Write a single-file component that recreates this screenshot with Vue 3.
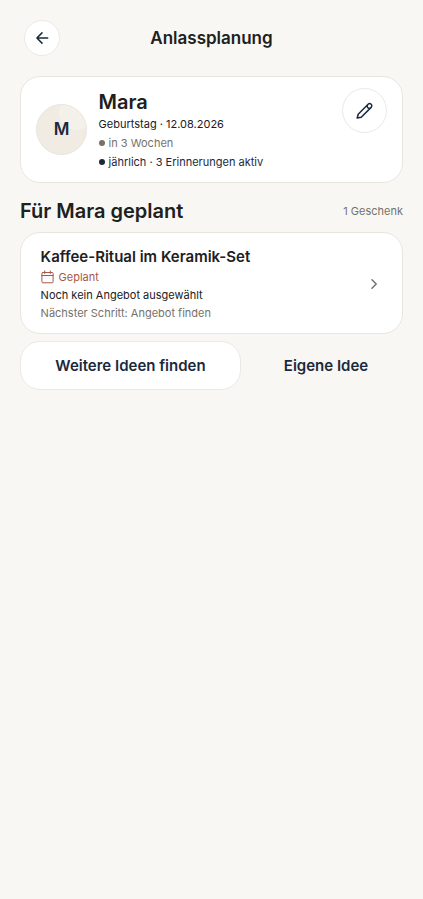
<script setup>
const occasion = {
  name: 'Mara',
  initial: 'M',
  kind: 'Geburtstag · 12.08.2026',
  due: 'in 3 Wochen',
  reminders: 'jährlich · 3 Erinnerungen aktiv',
}
const gifts = [
  {
    title: 'Kaffee-Ritual im Keramik-Set',
    status: 'Geplant',
    offer: 'Noch kein Angebot ausgewählt',
    next: 'Nächster Schritt: Angebot finden',
  },
]
</script>

<template>
  <main class="screen">
    <header class="topbar">
      <button class="round back" aria-label="Zurück">
        <svg width="18" height="18" viewBox="0 0 18 18">
          <path d="M9 3.900 3.900 9 9 14.100M4.100 9h10.600" />
        </svg>
      </button>
      <h1>Anlassplanung</h1>
    </header>

    <section class="card person">
      <div class="avatar"><span>{{ occasion.initial }}</span></div>
      <div class="details">
        <h2>{{ occasion.name }}</h2>
        <p class="kind">{{ occasion.kind }}</p>
        <p class="due"><i class="dot"></i>{{ occasion.due }}</p>
        <p class="reminders"><i class="dot"></i>{{ occasion.reminders }}</p>
      </div>
      <button class="round edit" aria-label="Bearbeiten">
        <svg width="20" height="20" viewBox="0 0 20 20">
          <path d="M2.200 17 3.200 13.200 13.100 3.300a2.150 2.150 0 0 1 3.050 3.050L6.200 16.200ZM12.600 3.900a2.150 2.150 0 0 0 3 3" />
        </svg>
      </button>
    </section>

    <div class="section-head">
      <h2>Für {{ occasion.name }} geplant</h2>
      <span>{{ gifts.length }} Geschenk</span>
    </div>

    <article v-for="gift in gifts" :key="gift.title" class="card gift">
      <div class="gift-text">
        <h3>{{ gift.title }}</h3>
        <p class="status">
          <svg width="14" height="14" viewBox="0 0 14 14">
            <path d="M1.900 2.500h9.200a1 1 0 0 1 1 1v8.300a1 1 0 0 1-1 1H1.900a1 1 0 0 1-1-1V3.500a1 1 0 0 1 1-1ZM.9 5.500h11.200M3.700 .9v2.600M9.300 .9v2.600" />
          </svg>
          {{ gift.status }}
        </p>
        <p>{{ gift.offer }}</p>
        <p class="next">{{ gift.next }}</p>
      </div>
      <svg class="chevron" width="12" height="14" viewBox="0 0 12 14">
        <path d="M4 3.800 8.200 8 4 12.200" />
      </svg>
    </article>

    <div class="actions">
      <button class="primary">Weitere Ideen finden</button>
      <button class="secondary">Eigene Idee</button>
    </div>
  </main>
</template>

<style>
body {
  background: #f8f7f3;
}
</style>

<style scoped>
.screen {
  box-sizing: border-box;
  min-height: 899px;
  padding: 20px 20px 0;
  background: #f8f7f3;
  color: #20201d;
  font-family: Inter, "Liberation Sans", sans-serif;
}
h1, h2, h3, p {
  margin: 0;
  font-weight: 400;
}
button {
  box-sizing: border-box;
  padding: 0;
  border: 0;
  background: none;
  color: #1b293d;
  font: 600 15px/20px Inter, "Liberation Sans", sans-serif;
}
svg {
  display: block;
  flex: none;
  fill: none;
  stroke: currentColor;
  stroke-width: 1.5;
  stroke-linecap: round;
  stroke-linejoin: round;
}
.topbar {
  display: grid;
  grid-template-columns: 44px 1fr 44px;
  align-items: center;
  height: 36px;
}
.round {
  display: flex;
  align-items: center;
  justify-content: center;
  border: 1px solid #ebe9e4;
  border-radius: 50%;
  background: #fff;
}
.back {
  width: 36px;
  height: 36px;
  margin-left: 4px;
}
.topbar h1 {
  text-align: center;
  font-size: 17px;
  font-weight: 600;
  line-height: 24px;
}
.card {
  box-sizing: border-box;
  display: flex;
  border: 1px solid #e9e6e0;
  border-radius: 20px;
  background: #fff;
}
.person {
  height: 107px;
  margin-top: 20px;
  padding: 11px 15px 0;
}
.avatar {
  box-sizing: border-box;
  position: relative;
  display: flex;
  align-items: center;
  justify-content: center;
  width: 51px;
  height: 51px;
  margin-top: 15.5px;
  overflow: hidden;
  border: 1px solid #e9e5dd;
  border-radius: 50%;
  background: #f0ece4;
  color: #1b293d;
  font-size: 17px;
  font-weight: 600;
}
.avatar::before {
  content: "";
  position: absolute;
  top: -10px;
  right: -8px;
  width: 35px;
  height: 35px;
  border-radius: 50%;
  background: #f4f1eb;
}
.avatar span {
  position: relative;
}
.details {
  flex: 1;
  margin-left: 11.6px;
  font-size: 11px;
  line-height: 19px;
}
.details h2 {
  padding-top: 1px;
  font-size: 20px;
  font-weight: 600;
  line-height: 26px;
}
.due {
  color: #77716b;
}
.reminders {
  color: #1b293d;
}
.dot {
  display: inline-block;
  width: 6px;
  height: 6px;
  margin-right: 4px;
  border-radius: 50%;
  background: currentColor;
  vertical-align: 1px;
}
.edit {
  width: 45px;
  height: 45px;
}
.section-head {
  display: flex;
  align-items: center;
  justify-content: space-between;
  height: 28px;
  margin-top: 14px;
}
.section-head h2 {
  font-size: 20px;
  font-weight: 600;
}
.section-head span {
  color: #77716b;
  font-size: 11px;
}
.gift {
  align-items: center;
  justify-content: space-between;
  height: 102px;
  margin-top: 7px;
  padding: 0 22px 0 19.6px;
}
.gift-text {
  font-size: 11px;
  line-height: 18px;
}
.gift h3 {
  padding-top: 1px;
  font-size: 15px;
  font-weight: 600;
  line-height: 23px;
}
.status {
  display: flex;
  align-items: center;
  gap: 4px;
  color: #a95843;
}
.status svg {
  stroke-width: 1;
}
.next,
.chevron {
  color: #77716b;
}
.actions {
  display: grid;
  grid-template-columns: 221px 1fr;
  gap: 8px;
  height: 49px;
  margin-top: 7px;
}
.primary {
  border: 1px solid #ebe9e4;
  border-radius: 20px;
  background: #fff;
}
</style>
